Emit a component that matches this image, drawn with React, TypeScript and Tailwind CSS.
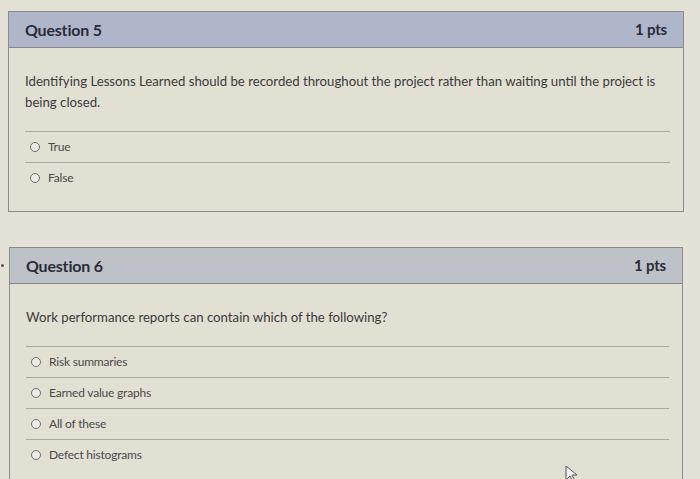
import React from "react";

type Question = {
  title: string;
  pts: string;
  text: string;
  options: string[];
  headerBg: string;
};

function Radio({ label }: { label: string }) {
  return (
    <div className="flex items-center h-[31px] border-t border-[#a9a8a0] pl-[5px]">
      <span className="w-[10px] h-[10px] rounded-full border-[1.5px] border-[#6f6f6f] bg-[#ecebe4]" />
      <span className="ml-[8px] text-[12px] text-[#4a4a4a] tracking-[-0.2px]">{label}</span>
    </div>
  );
}

function QuestionCard({ q, className }: { q: Question; className: string }) {
  return (
    <div className={`border border-[#8d8c88] bg-[#e2dfd3] ${className}`}>
      <div
        className={`flex items-center justify-between h-[36px] px-[16px] border-b border-[#85858a] ${q.headerBg}`}
      >
        <span className="text-[16px] font-bold text-[#2b2c3a] tracking-[-0.2px]">{q.title}</span>
        <span className="text-[15px] font-bold text-[#2b2c3a] tracking-[-0.2px]">{q.pts}</span>
      </div>
      <div className="pl-[16px] pr-[13px] pt-[23px] pb-[18px]">
        <p className="text-[13.2px] leading-[21px] text-[#3b3b3b] pr-[4px]">{q.text}</p>
        <div className="mt-[18px]">
          {q.options.map((o) => (
            <Radio key={o} label={o} />
          ))}
        </div>
      </div>
    </div>
  );
}

const questions: Question[] = [
  {
    title: "Question 5",
    pts: "1 pts",
    text: "Identifying Lessons Learned should be recorded throughout the project rather than waiting until the project is being closed.",
    options: ["True", "False"],
    headerBg: "bg-[#b0b6ca]",
  },
  {
    title: "Question 6",
    pts: "1 pts",
    text: "Work performance reports can contain which of the following?",
    options: ["Risk summaries", "Earned value graphs", "All of these", "Defect histograms"],
    headerBg: "bg-[#bec1c8]",
  },
];

export default function App() {
  return (
    <div
      className="relative w-[700px] h-[479px] overflow-hidden bg-[#e4e1d6] pt-[11px] pl-[8px] pr-[16px]"
      style={{ fontFamily: "Lato, 'Open Sans', sans-serif" }}
    >
      <QuestionCard q={questions[0]} className="" />
      <QuestionCard q={questions[1]} className="mt-[35px] ml-[1px] mr-[1px]" />
      <span className="absolute left-[1px] top-[264px] w-[3px] h-[3px] rounded-full bg-[#555]" />
      <svg className="absolute left-[565px] top-[465px]" width="14" height="18" viewBox="0 0 14 18">
        <path d="M1 1 L1 15 L5 11 L8 17 L10 16 L7 10 L12 10 Z" fill="#f2f2f2" stroke="#555" strokeWidth="1" />
      </svg>
    </div>
  );
}
